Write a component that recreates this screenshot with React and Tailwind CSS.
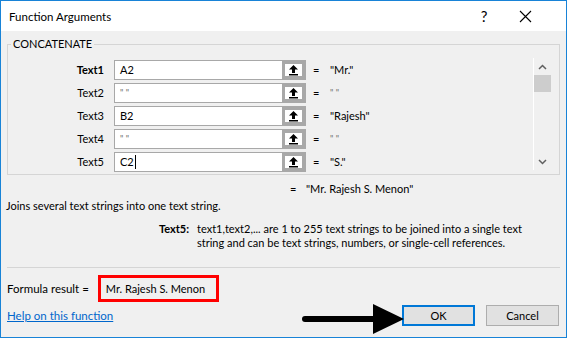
import React from 'react';

const rows = [
  { label: 'Text1', input: 'A2', value: '"Mr."', bold: true },
  { label: 'Text2', input: '" "', value: '" "', dim: true },
  { label: 'Text3', input: 'B2', value: '"Rajesh"' },
  { label: 'Text4', input: '" "', value: '" "', dim: true },
  { label: 'Text5', input: 'C2', value: '"S."', caret: true },
];

const RefButton = () => (
  <div className="w-[23px] h-full border-[3px] border-[#a8a8a8] bg-white flex items-center justify-center">
    <svg width="11" height="12" viewBox="0 0 11 12">
      <path d="M5.5 1 L10 5.5 L7 5.5 L7 9 L4 9 L4 5.5 L1 5.5 Z" fill="#000" />
      <rect x="1" y="10" width="9" height="1.5" fill="#000" />
    </svg>
  </div>
);

const ArgRow = ({ label, input, value, bold, dim, caret }) => (
  <div className="flex items-center h-[23px]">
    <div className={`w-[106px] text-right pr-[10px] ${bold ? 'font-bold' : ''}`}>{label}</div>
    <div className="flex h-[20px] w-[192px] border border-[#a8a8a8] bg-white">
      <div className={`flex-1 flex items-center pl-[5px] ${dim ? 'text-[#707070] text-[9px]' : ''}`}>
        {input}
        {caret && <span className="inline-block w-px h-[14px] bg-black ml-px" />}
      </div>
      <RefButton />
    </div>
    <div className="w-[10px] ml-[7px]">=</div>
    <div className={`ml-[7px] ${dim ? 'text-[#707070] text-[9px]' : ''}`}>{value}</div>
  </div>
);

export default function App() {
  return (
    <div
      className="w-[567px] h-[338px] border border-[#1883d7] bg-[#f0f0f0] text-[11px] leading-[15px] text-[#000] flex flex-col overflow-hidden relative"
      style={{ fontFamily: 'Lato, "Open Sans", sans-serif' }}
    >
      {/* Title bar */}
      <div className="h-[30px] bg-white flex items-center shrink-0">
        <div className="pl-[8px] flex-1 text-[11.5px]">Function Arguments</div>
        <div className="w-[40px] text-center text-[15px]">?</div>
        <div className="w-[42px] mr-[20px] flex justify-center">
          <svg width="13" height="13" viewBox="0 0 13 13">
            <path d="M1 1 L12 12 M12 1 L1 12" stroke="#000" strokeWidth="1.1" />
          </svg>
        </div>
      </div>

      {/* Group box */}
      <div className="mx-[6px] mt-[13px] h-[131px] shrink-0 border border-[#d5d5d5] relative">
        <div className="absolute -top-[9px] left-[3px] bg-[#f0f0f0] px-[2px] leading-[16px]">CONCATENATE</div>
        <div className="flex pt-[13px]">
          <div className="flex flex-col flex-1">
            {rows.map((r) => (
              <ArgRow key={r.label} {...r} />
            ))}
          </div>
          <div className="w-[18px] mr-[8px] h-[112px] border-l border-white flex flex-col items-center">
            <svg className="mt-[6px]" width="9" height="6" viewBox="0 0 9 6">
              <path d="M1 5 L4.5 1.5 L8 5" stroke="#606060" strokeWidth="1.5" fill="none" />
            </svg>
            <div className="w-[17px] h-[17px] bg-[#cdcdcd] mt-[5px]" />
            <div className="flex-1" />
            <svg className="mb-[5px]" width="9" height="6" viewBox="0 0 9 6">
              <path d="M1 1 L4.5 4.5 L8 1" stroke="#606060" strokeWidth="1.5" fill="none" />
            </svg>
          </div>
        </div>
      </div>

      {/* Result and description */}
      <div className="flex mt-[4px] h-[18px] items-center">
        <div className="ml-[289px] w-[10px]">=</div>
        <div className="ml-[6px]">"Mr. Rajesh S. Menon"</div>
      </div>
      <div className="pl-[5px] h-[16px] flex items-center">Joins several text strings into one text string.</div>
      <div className="flex mt-[9px] leading-[14px] h-[28px]">
        <div className="w-[194px] text-right font-bold pr-[6px]">Text5:</div>
        <div className="w-[330px] ml-[2px]">
          text1,text2,... are 1 to 255 text strings to be joined into a single text string and can be text strings, numbers, or single-cell references.
        </div>
      </div>

      {/* Separator */}
      <div className="mx-[6px] mt-[17px] border-t border-[#d5d5d5]" />

      {/* Formula result */}
      <div className="flex items-center mt-[7px] pl-[6px]">
        <span className="whitespace-nowrap text-[11.5px]">Formula result =</span>
        <div className="ml-[9px] w-[121px] h-[27px] border-[3px] border-[#ff0000] flex items-center pl-[5px] whitespace-nowrap">
          Mr. Rajesh S. Menon
        </div>
      </div>

      {/* Bottom row */}
      <div className="flex items-center mt-[3px] pl-[6px]">
        <a className="text-[#0066cc] underline flex-1 text-[11.5px]">Help on this function</a>
        <button className="w-[73px] h-[21px] bg-[#e1e1e1] border-2 border-[#0078d7] text-[11px]">OK</button>
        <button className="ml-[11px] mr-[7px] w-[73px] h-[21px] bg-[#e1e1e1] border border-[#adadad] text-[11px]">Cancel</button>
      </div>

      {/* Annotation arrow */}
      <svg className="absolute left-[298px] top-[301px]" width="108" height="34" viewBox="0 0 108 34">
        <line x1="6" y1="17" x2="78" y2="17" stroke="#000" strokeWidth="6" strokeLinecap="round" />
        <path d="M74 2 L105 17 L74 32 Z" fill="#000" />
      </svg>
    </div>
  );
}
